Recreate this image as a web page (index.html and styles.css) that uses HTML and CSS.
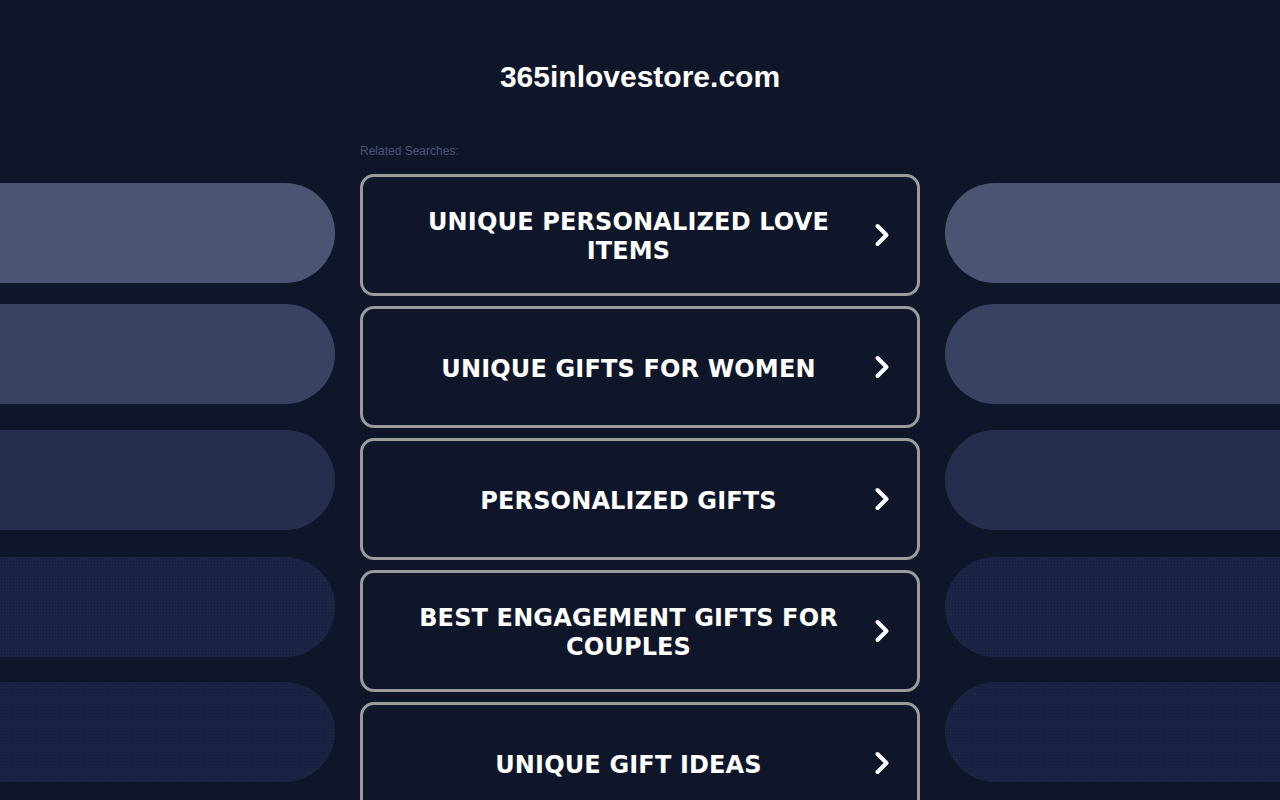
FILE: index.html
```html
<!DOCTYPE html>
<html lang="en">
<head>
<meta charset="utf-8">
<title>365inlovestore.com</title>
<link rel="stylesheet" href="styles.css">
</head>
<body>
<div class="page">
  <div class="side side-left">
    <div class="pill p1"></div>
    <div class="pill p2"></div>
    <div class="pill p3"></div>
    <div class="pill p4"></div>
    <div class="pill p5"></div>
  </div>
  <main class="center">
    <h1 class="title">365inlovestore.com</h1>
    <div class="related">Related Searches:</div>
    <ul class="links">
      <li><a class="link" href="#"><span class="label">UNIQUE PERSONALIZED LOVE ITEMS</span><svg class="chev" viewBox="0 0 16 26" width="16" height="26"><polyline points="3.5,4 12.5,13 3.5,22" /></svg></a></li>
      <li><a class="link" href="#"><span class="label">UNIQUE GIFTS FOR WOMEN</span><svg class="chev" viewBox="0 0 16 26" width="16" height="26"><polyline points="3.5,4 12.5,13 3.5,22" /></svg></a></li>
      <li><a class="link" href="#"><span class="label">PERSONALIZED GIFTS</span><svg class="chev" viewBox="0 0 16 26" width="16" height="26"><polyline points="3.5,4 12.5,13 3.5,22" /></svg></a></li>
      <li><a class="link" href="#"><span class="label">BEST ENGAGEMENT GIFTS FOR COUPLES</span><svg class="chev" viewBox="0 0 16 26" width="16" height="26"><polyline points="3.5,4 12.5,13 3.5,22" /></svg></a></li>
      <li><a class="link" href="#"><span class="label">UNIQUE GIFT IDEAS</span><svg class="chev" viewBox="0 0 16 26" width="16" height="26"><polyline points="3.5,4 12.5,13 3.5,22" /></svg></a></li>
    </ul>
  </main>
  <div class="side side-right">
    <div class="pill p1"></div>
    <div class="pill p2"></div>
    <div class="pill p3"></div>
    <div class="pill p4"></div>
    <div class="pill p5"></div>
  </div>
</div>
</body>
</html>
```
FILE: styles.css
```css
html, body {
  margin: 0;
  padding: 0;
  background: #101629;
  height: 100%;
  overflow: hidden;
}
body {
  font-family: "Liberation Sans", Arial, sans-serif;
  color: #fff;
}
.page {
  display: grid;
  grid-template-columns: 335px 560px 335px;
  column-gap: 25px;
  width: 1280px;
  height: 800px;
}
.side {
  display: flex;
  flex-direction: column;
  padding-top: 183px;
}
.pill {
  height: 100px;
  flex: none;
}
.side-left .pill { border-radius: 0 50px 50px 0; }
.side-right .pill { border-radius: 50px 0 0 50px; }
.p1 { background: #4b5572; margin-bottom: 21px; }
.p2 { background: #3a4261; margin-bottom: 26px; }
.p3 { background: #272e4d; margin-bottom: 27px; }
.p4 {
  background-color: #1c2545;
  background-image: radial-gradient(rgba(10,14,35,0.35) 0.6px, transparent 0.8px);
  background-size: 3px 3px;
  margin-bottom: 25px;
}
.p5 {
  background-color: #1b2344;
  background-image: radial-gradient(rgba(10,14,35,0.35) 0.6px, transparent 0.8px);
  background-size: 3px 3px;
}
.center {
  display: flex;
  flex-direction: column;
}
.title {
  margin: 0;
  padding-top: 59px;
  height: 36px;
  line-height: 36px;
  font-size: 30px;
  font-weight: bold;
  text-align: center;
  color: #fff;
}
.related {
  margin-top: 49px;
  font-size: 12px;
  line-height: 14px;
  color: #4a5477;
}
.links {
  list-style: none;
  margin: 16px 0 0;
  padding: 0;
  display: flex;
  flex-direction: column;
  gap: 10px;
}
.link {
  box-sizing: border-box;
  height: 122px;
  border: 3px solid #9b9b9b;
  border-radius: 14px;
  display: flex;
  align-items: center;
  padding: 0 27px 0 40px;
  text-decoration: none;
  color: #fff;
}
.label {
  flex: 1;
  text-align: center;
  font-family: "DejaVu Sans", Verdana, sans-serif;
  font-weight: bold;
  font-size: 24px;
  letter-spacing: 0.15px;
  line-height: 29px;
  padding-top: 4px;
  color: #fff;
}
.chev {
  flex: none;
  margin-left: 20px;
}
.chev polyline {
  fill: none;
  stroke: #fff;
  stroke-width: 4;
  stroke-linecap: round;
  stroke-linejoin: round;
}
```
